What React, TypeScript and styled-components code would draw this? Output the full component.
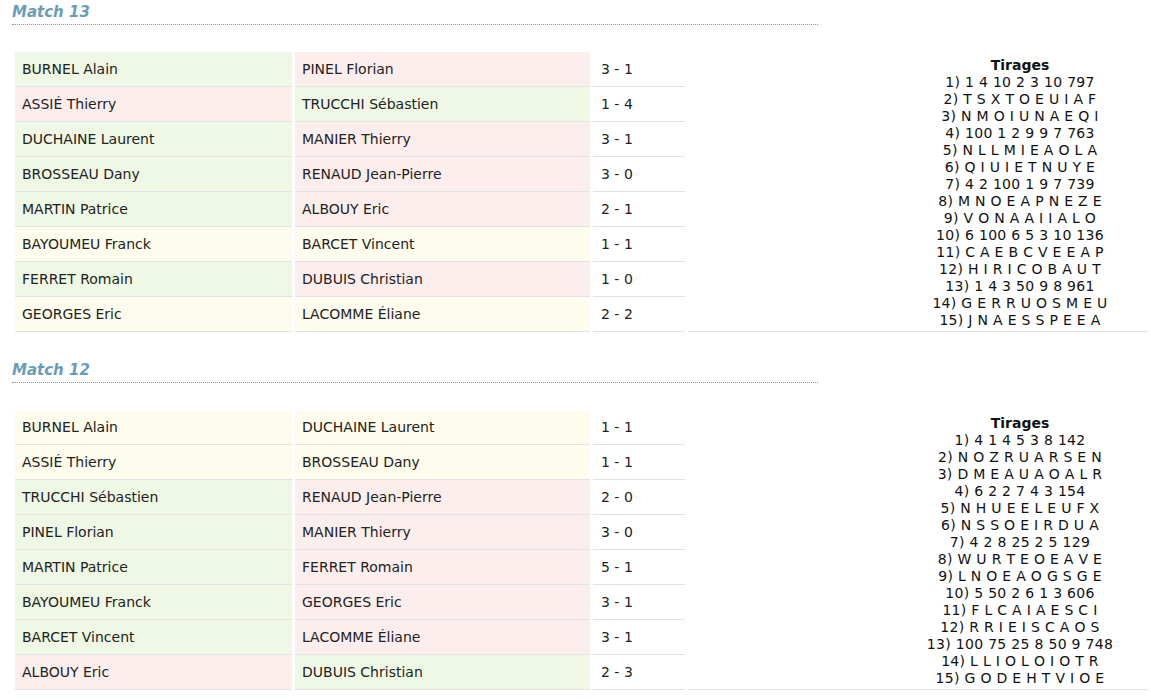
import React from 'react';
import styled, { createGlobalStyle } from 'styled-components';

const GlobalStyle = createGlobalStyle`
  html, body {
    margin: 0;
    padding: 0;
    background: #ffffff;
    overflow: hidden;
  }
  body {
    font-family: 'DejaVu Sans', Verdana, sans-serif;
    color: #222;
  }
`;

type Outcome = 'win' | 'loss' | 'draw';

const tones: Record<Outcome, string> = {
  win: '#eef8e5',
  loss: '#fdeeee',
  draw: '#fefcec',
};

const Page = styled.div`
  display: flex;
  flex-direction: column;
  padding: 0 0 0 12px;
  gap: 26px;
`;

const Section = styled.section`
  display: flex;
  flex-direction: column;
`;

const Title = styled.h2`
  margin: 0;
  width: 806px;
  padding-top: 4px;
  height: 20px;
  font-size: 15px;
  line-height: 17px;
  font-weight: bold;
  font-style: italic;
  color: #6c9db7;
  border-bottom: 1px dotted #7a99a8;
`;

const Table = styled.table`
  margin-top: 27px;
  width: 1139px;
  border-collapse: separate;
  border-spacing: 3px 0;
  font-size: 14px;
`;

const NameCell = styled.td<{ $tone: Outcome; $w: number }>`
  width: ${(p) => p.$w}px;
  height: 35px;
  padding: 0 7px;
  box-sizing: border-box;
  background: ${(p) => tones[p.$tone]};
  border-bottom: 1px solid #e3e3e3;
  white-space: nowrap;
`;

const ScoreCell = styled.td`
  width: 92px;
  height: 35px;
  padding: 0 8px;
  box-sizing: border-box;
  border-bottom: 1px solid #e3e3e3;
  white-space: nowrap;
`;

const DrawsCell = styled.td`
  vertical-align: middle;
  text-align: center;
  padding: 3px 0 0 204px;
  border-bottom: 1px solid #e3e3e3;
  font-size: 14px;
  line-height: 17px;
  letter-spacing: 0.3px;
  color: #111;
`;

const DrawsTitle = styled.div`
  font-weight: bold;
  letter-spacing: 0;
`;

type Game = [string, string, number, number];

interface MatchData {
  title: string;
  games: Game[];
  draws: string[];
}

const matches: MatchData[] = [
  {
    title: 'Match 13',
    games: [
      ['BURNEL Alain', 'PINEL Florian', 3, 1],
      ['ASSIÉ Thierry', 'TRUCCHI Sébastien', 1, 4],
      ['DUCHAINE Laurent', 'MANIER Thierry', 3, 1],
      ['BROSSEAU Dany', 'RENAUD Jean-Pierre', 3, 0],
      ['MARTIN Patrice', 'ALBOUY Eric', 2, 1],
      ['BAYOUMEU Franck', 'BARCET Vincent', 1, 1],
      ['FERRET Romain', 'DUBUIS Christian', 1, 0],
      ['GEORGES Eric', 'LACOMME Éliane', 2, 2],
    ],
    draws: [
      '1 4 10 2 3 10 797',
      'T S X T O E U I A F',
      'N M O I U N A E Q I',
      '100 1 2 9 9 7 763',
      'N L L M I E A O L A',
      'Q I U I E T N U Y E',
      '4 2 100 1 9 7 739',
      'M N O E A P N E Z E',
      'V O N A A I I A L O',
      '6 100 6 5 3 10 136',
      'C A E B C V E E A P',
      'H I R I C O B A U T',
      '1 4 3 50 9 8 961',
      'G E R R U O S M E U',
      'J N A E S S P E E A',
    ],
  },
  {
    title: 'Match 12',
    games: [
      ['BURNEL Alain', 'DUCHAINE Laurent', 1, 1],
      ['ASSIÉ Thierry', 'BROSSEAU Dany', 1, 1],
      ['TRUCCHI Sébastien', 'RENAUD Jean-Pierre', 2, 0],
      ['PINEL Florian', 'MANIER Thierry', 3, 0],
      ['MARTIN Patrice', 'FERRET Romain', 5, 1],
      ['BAYOUMEU Franck', 'GEORGES Eric', 3, 1],
      ['BARCET Vincent', 'LACOMME Éliane', 3, 1],
      ['ALBOUY Eric', 'DUBUIS Christian', 2, 3],
    ],
    draws: [
      '4 1 4 5 3 8 142',
      'N O Z R U A R S E N',
      'D M E A U A O A L R',
      '6 2 2 7 4 3 154',
      'N H U E E L E U F X',
      'N S S O E I R D U A',
      '4 2 8 25 2 5 129',
      'W U R T E O E A V E',
      'L N O E A O G S G E',
      '5 50 2 6 1 3 606',
      'F L C A I A E S C I',
      'R R I E I S C A O S',
      '100 75 25 8 50 9 748',
      'L L I O L O I O T R',
      'G O D E H T V I O E',
    ],
  },
];

const outcome = (a: number, b: number): Outcome => (a > b ? 'win' : a < b ? 'loss' : 'draw');

const Match = ({ title, games, draws }: MatchData) => (
  <Section>
    <Title>{title}</Title>
    <Table>
      <tbody>
        {games.map(([home, away, a, b], i) => (
          <tr key={home}>
            <NameCell $tone={outcome(a, b)} $w={277}>
              {home}
            </NameCell>
            <NameCell $tone={outcome(b, a)} $w={295}>
              {away}
            </NameCell>
            <ScoreCell>
              {a} - {b}
            </ScoreCell>
            {i === 0 && (
              <DrawsCell rowSpan={games.length}>
                <DrawsTitle>Tirages</DrawsTitle>
                {draws.map((d, k) => (
                  <div key={k}>
                    {k + 1}) {d}
                  </div>
                ))}
              </DrawsCell>
            )}
          </tr>
        ))}
      </tbody>
    </Table>
  </Section>
);

export default function App() {
  return (
    <>
      <GlobalStyle />
      <Page>
        {matches.map((m) => (
          <Match key={m.title} {...m} />
        ))}
      </Page>
    </>
  );
}
